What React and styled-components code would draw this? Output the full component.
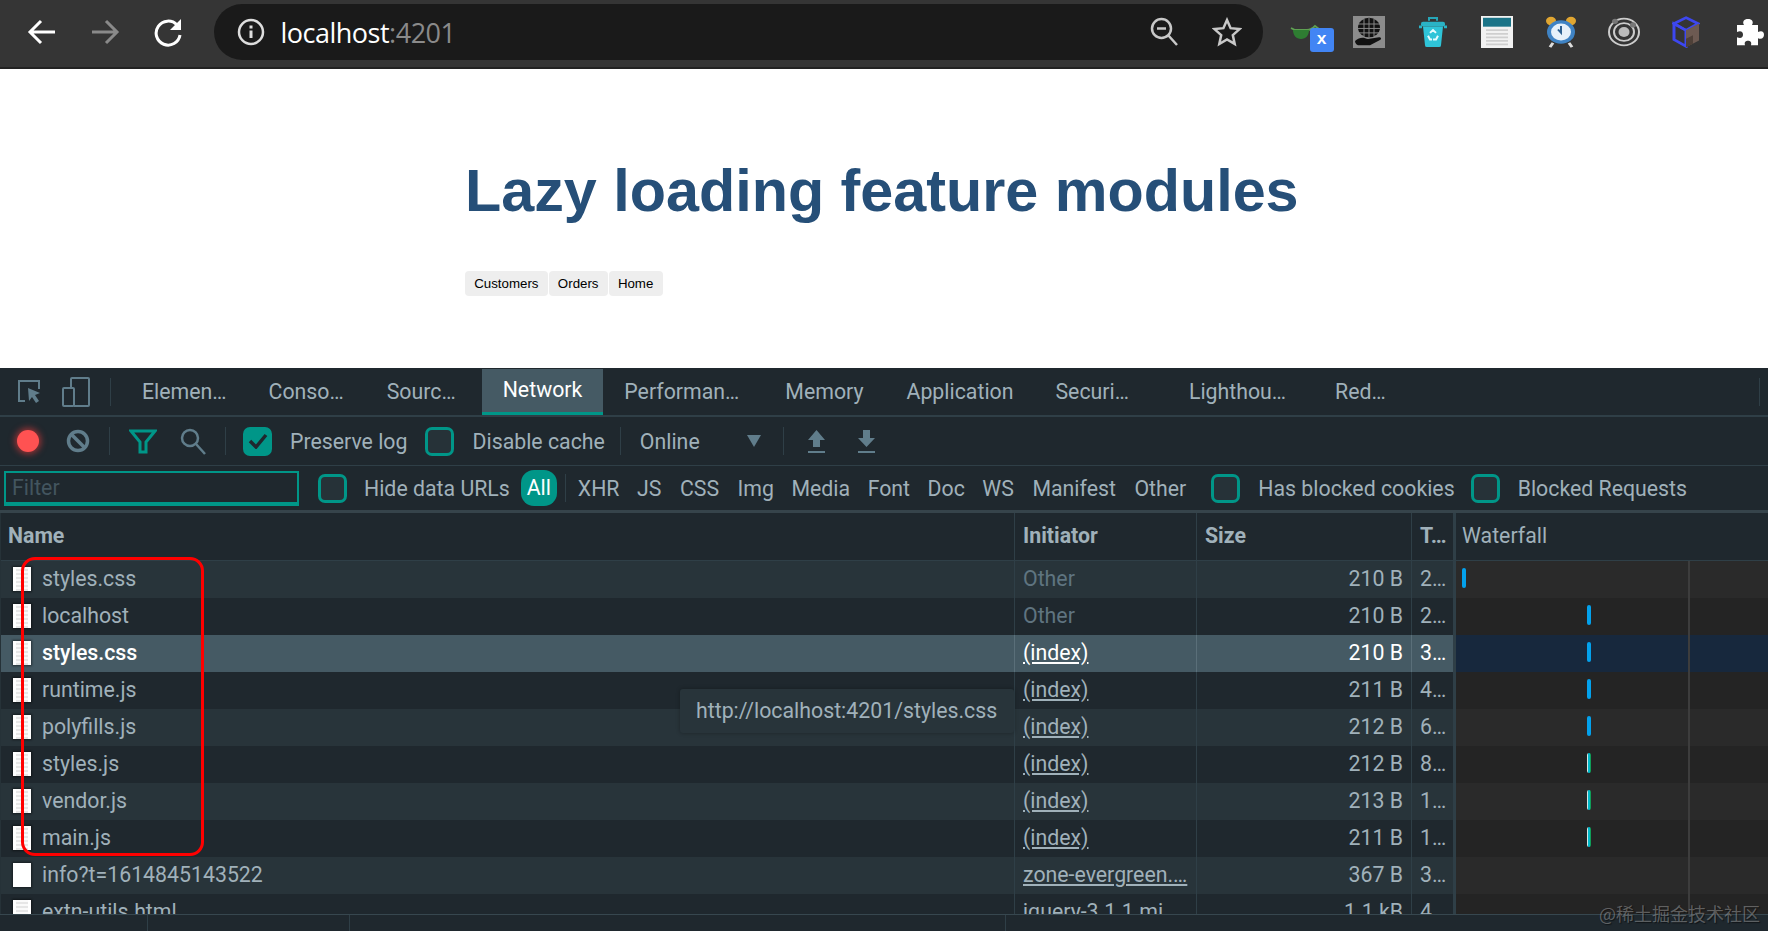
import React from 'react'
import styled, { createGlobalStyle } from 'styled-components'

const GlobalStyle = createGlobalStyle`
  html, body { margin: 0; padding: 0; background: #fff; height: 100%; overflow: hidden; }
  * { box-sizing: border-box; }
`

const TEAL = '#009688'
const TEXT = '#a0b1ba'
const ICON = '#607d8b'
const LINE = '#2f3f47'

const Page = styled.div`
  width: 1768px;
  height: 931px;
  position: relative;
  overflow: hidden;
  display: flex;
  flex-direction: column;
  font-family: Roboto, "Noto Sans", sans-serif;
`

/* browser chrome */
const ChromeBar = styled.header`
  height: 69px;
  flex: none;
  display: flex;
  align-items: flex-start;
  background: #353535;
  border-bottom: 2px solid #222;
  padding: 4px 0 0 26px;
`
const NavButton = styled.div`
  width: 32px;
  height: 56px;
  margin-right: 31px;
  display: flex;
  align-items: center;
  justify-content: center;
  flex: none;
`
const Omnibox = styled.div`
  width: 1049px;
  height: 56px;
  margin-left: -1.5px;
  flex: none;
  display: flex;
  align-items: center;
  background: #1a1a1a;
  border-radius: 28px;
  padding: 0 21px 0 23px;
`
const Url = styled.div`
  margin-left: 16px;
  flex: 1;
  font: 400 27px "Open Sans", sans-serif;
  letter-spacing: -0.5px;
  color: #fff;
  span { color: #8a8a8a; }
`
const OmniIcon = styled.div`
  display: flex;
  margin-left: ${p => p.$gap || 0}px;
`
const Extensions = styled.div`
  display: flex;
  align-items: center;
  height: 56px;
  margin-left: 26px;
`
const ExtSlot = styled.div`
  width: ${p => p.$w}px;
  margin-right: ${p => p.$gap}px;
  height: 36px;
  display: flex;
  align-items: center;
  justify-content: center;
  position: relative;
  flex: none;
`
const XBadge = styled.div`
  position: absolute;
  left: 21px;
  top: 14px;
  width: 24px;
  height: 24px;
  border-radius: 3px;
  background: #4285f4;
  color: #fff;
  font: 700 17px/24px "Liberation Mono", monospace;
  text-align: center;
`

/* the page under test */
const Content = styled.main`
  height: 299px;
  flex: none;
  background: #fff;
  padding-left: 465px;
  font-family: "Liberation Sans", Arial, sans-serif;
`
const Title = styled.h1`
  margin: 0;
  padding-top: 87px;
  font-size: 59.3px;
  line-height: 70px;
  font-weight: 700;
  color: #264f78;
`
const Nav = styled.nav`
  margin-top: 45px;
  display: flex;
  gap: 1px;
`
const NavLink = styled.a`
  height: 25px;
  padding: 0 9.2px;
  border-radius: 4px;
  background: #eee;
  color: #000;
  font-size: 13.3px;
  line-height: 25px;
`

/* devtools */
const DevTools = styled.section`
  flex: 1;
  min-height: 0;
  display: flex;
  flex-direction: column;
  background: #1f282e;
  color: ${TEXT};
  font-size: 21.3px;
`
const TabBar = styled.div`
  height: 49px;
  flex: none;
  display: flex;
  align-items: stretch;
  border-bottom: 2px solid ${LINE};
  padding-left: 17px;
`
const Tab = styled.div`
  display: flex;
  align-items: center;
  height: ${p => (p.$active ? '46px' : '47px')};
  margin-top: ${p => (p.$active ? '1px' : '0')};
  padding: ${p => (p.$active ? '0 21px 3px' : '0')};
  margin-left: ${p => p.$gap}px;
  white-space: nowrap;
  background: ${p => (p.$active ? '#455a64' : 'transparent')};
  color: ${p => (p.$active ? '#fff' : TEXT)};
  border-bottom: ${p => (p.$active ? `3px solid ${TEAL}` : 'none')};
`
const ToolGroup = styled.div`
  display: flex;
  align-items: center;
  flex: none;
  margin-left: ${p => p.$left || 0}px;
`
const Sep = styled.div`
  width: 1px;
  height: 28px;
  flex: none;
  background: ${LINE};
  margin-left: ${p => p.$left || 0}px;
`
const TabSep = styled(Sep)`
  align-self: center;
`
const TabEndSep = styled(TabSep)`
  margin-left: auto;
  margin-right: 8px;
`
const Toolbar = styled.div`
  height: 49px;
  flex: none;
  display: flex;
  align-items: center;
  border-bottom: 1px solid ${LINE};
  padding-left: 17px;
`
const RecordDot = styled.div`
  width: 22px;
  height: 22px;
  border-radius: 50%;
  background: #ff5252;
  box-shadow: 0 0 6px 2px rgba(255, 60, 60, 0.55);
  flex: none;
`
const Check = styled.div`
  width: 29px;
  height: 29px;
  flex: none;
  border-radius: 7px;
  border: 3px solid ${TEAL};
  background: ${p => (p.$on ? TEAL : '#263238')};
  margin-left: ${p => p.$left || 0}px;
  display: flex;
  align-items: center;
  justify-content: center;
`
const Label = styled.span`
  margin-left: ${p => p.$left || 18}px;
  white-space: nowrap;
`
const FilterBar = styled.div`
  height: 47px;
  flex: none;
  display: flex;
  align-items: center;
  border-bottom: 3px solid #36444b;
  padding-left: 4px;
`
const FilterInput = styled.div`
  width: 295px;
  height: 35px;
  flex: none;
  margin-top: 1px;
  border: 2px solid ${TEAL};
  border-bottom-width: 4px;
  color: #43555f;
  padding-left: 6px;
  line-height: 30px;
`
const Pill = styled.div`
  width: 36px;
  height: 36px;
  flex: none;
  margin-left: ${p => p.$left}px;
  border-radius: 13px;
  background: ${TEAL};
  color: #fff;
  text-align: center;
  line-height: 36px;
`
const TypeFilter = styled.span`
  margin-left: ${p => p.$left}px;
  white-space: nowrap;
`
const Table = styled.div`
  flex: 1;
  min-height: 0;
  overflow: hidden;
  border-left: 1px solid #263238;
`
const Row = styled.div`
  display: grid;
  grid-template-columns: 1013px 182px 215px 42px 1fr;
  height: ${p => (p.$head ? 48 : 37)}px;
  background: ${p => (p.$selected ? '#455a64' : p.$odd ? '#28343a' : '#1f282e')};
  color: ${p => (p.$selected ? '#fff' : TEXT)};
  font-weight: ${p => (p.$head ? 700 : 400)};
  border-bottom: ${p => (p.$head ? `1px solid ${LINE}` : 'none')};
`
const Cell = styled.div`
  display: flex;
  align-items: center;
  min-width: 0;
  padding: 0 8px 2px;
  overflow: hidden;
  white-space: nowrap;
  border-left: ${p => (p.$first ? 'none' : `1px solid ${p.$selected ? '#5a6f79' : LINE}`)};
  justify-content: ${p => (p.$right ? 'flex-end' : 'flex-start')};
  color: ${p => p.$color || 'inherit'};
`
const NameCell = styled(Cell)`
  padding-left: 7px;
  font-weight: ${p => (p.$selected ? 500 : 'inherit')};
`
const WaterfallHead = styled(Cell)`
  font-weight: 400;
  border-left-width: 3px;
  padding-left: 6px;
`
const InitLink = styled.span`
  text-decoration: underline;
`
const FileIcon = styled.div`
  width: 18px;
  height: 24px;
  flex: none;
  margin: 0 11px 0 5px;
  background: ${p => (p.$plain
    ? '#fff'
    : 'linear-gradient(90deg, #fff 0 3px, transparent 3px 15px, #fff 15px), repeating-linear-gradient(180deg, #fafafa 0 2px, #e6e6e6 2px 4px)')};
  box-shadow: 0 0 2px 1px rgba(0, 0, 0, 0.45);
`
const Waterfall = styled.div`
  border-left: 3px solid ${LINE};
  position: relative;
  background: ${p => (p.$selected ? '#17283d' : p.$odd ? '#2a2a2a' : '#242424')};
  &::after {
    content: '';
    position: absolute;
    left: 232px;
    top: 0;
    bottom: 0;
    width: 2px;
    background: #3d3d3d;
  }
`
const Bar = styled.div`
  position: absolute;
  top: 7px;
  left: ${p => p.$left}px;
  width: 4px;
  height: 20px;
  border-radius: 2px;
  background: ${p => (p.$mixed ? 'linear-gradient(90deg, #d8e6e6 0 1px, #00b8c8 1px 3px, #0f9d58 3px)' : '#03a1ec')};
`
const StatusBar = styled.div`
  height: 17px;
  flex: none;
  border-top: 1px solid #37474f;
  display: flex;
`
const StatusCell = styled.div`
  width: ${p => p.$w}px;
  height: 100%;
  flex: none;
  border-right: 1px solid ${LINE};
`

/* things lying over the table */
const Highlight = styled.div`
  position: absolute;
  left: 21px;
  top: 557px;
  width: 183px;
  height: 299px;
  border: 3.5px solid #f00;
  border-radius: 14px;
  pointer-events: none;
`
const Tooltip = styled.div`
  position: absolute;
  left: 680px;
  top: 689px;
  width: 334px;
  height: 44px;
  border-radius: 3px;
  background: #28343a;
  color: ${TEXT};
  font-size: 21.3px;
  padding-left: 16px;
  line-height: 44px;
  box-shadow: 0 0 4px rgba(0, 0, 0, 0.3);
`
const Watermark = styled.div`
  position: absolute;
  right: 8px;
  top: 900px;
  font: 400 18px "Noto Sans CJK SC", "Noto Sans", sans-serif;
  color: rgba(190, 190, 190, 0.42);
  text-shadow: 1px 1px 1px rgba(0, 0, 0, 0.5);
  white-space: nowrap;
`

const rows = [
  { name: 'styles.css', init: 'Other', size: '210 B', time: '2…', bar: 6 },
  { name: 'localhost', init: 'Other', size: '210 B', time: '2…', bar: 131 },
  { name: 'styles.css', init: '(index)', size: '210 B', time: '3…', bar: 131, selected: true },
  { name: 'runtime.js', init: '(index)', size: '211 B', time: '4…', bar: 131 },
  { name: 'polyfills.js', init: '(index)', size: '212 B', time: '6…', bar: 131 },
  { name: 'styles.js', init: '(index)', size: '212 B', time: '8…', bar: 131, mixed: true },
  { name: 'vendor.js', init: '(index)', size: '213 B', time: '1…', bar: 131, mixed: true },
  { name: 'main.js', init: '(index)', size: '211 B', time: '1…', bar: 131, mixed: true },
  { name: 'info?t=1614845143522', init: 'zone-evergreen.…', size: '367 B', time: '3…', plain: true },
  { name: 'extn-utils.html', init: 'jquery-3.1.1.mi…', size: '1.1 kB', time: '4…' },
]

const tabs = [
  ['Elemen…', 31], ['Conso…', 42], ['Sourc…', 43], ['Network', 26, true], ['Performan…', 21],
  ['Memory', 46], ['Application', 43], ['Securi…', 42], ['Lighthou…', 60], ['Red…', 49],
]

const types = [
  ['XHR', 12], ['JS', 17.5], ['CSS', 18.5], ['Img', 18.5], ['Media', 17.5], ['Font', 17.5],
  ['Doc', 17.5], ['WS', 17.5], ['Manifest', 18.5], ['Other', 18.5],
]

const Glasses = () => (
  <svg width="30" height="18" viewBox="0 0 30 18">
    <path d="M1 5l4 2h12c3 0 6-2 8-4l4 3" fill="none" stroke="#5fa052" strokeWidth="1.8" />
    <path d="M3 7h16c0 5-3 9-8 9-5 0-8-4-8-9z" fill="#2e7d32" />
  </svg>
)

const Globe = () => (
  <svg width="32" height="32" viewBox="0 0 32 36" preserveAspectRatio="none">
    <rect width="32" height="36" fill="#8c8c8c" />
    <circle cx="16" cy="13" r="11" fill="#111" />
    <path d="M5 9h22M5 14h22M6 19h20M11 3v20M16 2v22M21 3v20" stroke="#8c8c8c" />
    <path d="M2 28c5-5 9-4 13-2l11-2c2 0 3 2 1 3l-10 6H7c-3 0-5-2-5-5z" fill="#111" />
  </svg>
)

const Trash = () => (
  <svg width="30" height="30" viewBox="0 0 30 32" preserveAspectRatio="none">
    <path d="M11 4V1h8v3" fill="none" stroke="#26a6b8" strokeWidth="2" />
    <rect x="3" y="5" width="24" height="5" rx="2" fill="#2ab3c6" />
    <path d="M1 12h3v-3H1zM26 12h3v-3h-3z" fill="#2ab3c6" />
    <path d="M5 10h20l-2 20a2 2 0 0 1-2 2H9a2 2 0 0 1-2-2z" fill="#2fc4d8" />
    <path d="M12 17l3-3 3 3M20 20l-2 4h-3M10 20l2 4h2" fill="none" stroke="#e6fbfd" strokeWidth="2" />
  </svg>
)

const Sheet = () => (
  <svg width="32" height="32" viewBox="0 0 32 36" preserveAspectRatio="none">
    <rect width="32" height="36" fill="#f2f2f2" />
    <rect x="2" y="2" width="28" height="10" fill="#1b7488" />
    <path d="M5 16h22M5 20h22M5 24h22M5 28h22M5 32h22" stroke="#cfcfcf" strokeWidth="2" />
  </svg>
)

const Clock = () => (
  <svg width="32" height="32" viewBox="0 0 32 38" preserveAspectRatio="none">
    <circle cx="6" cy="6" r="5" fill="#e0a631" />
    <circle cx="26" cy="6" r="5" fill="#e0a631" />
    <path d="M8 32l-3 5M24 32l3 5" stroke="#ddd" strokeWidth="3" />
    <circle cx="16" cy="19" r="14" fill="#3f83c4" />
    <circle cx="16" cy="19" r="10" fill="#e6f1fa" />
    <path d="M16 12v8l-3-4" fill="none" stroke="#2c5f90" strokeWidth="2" />
  </svg>
)

const Target = () => (
  <svg width="32" height="32" viewBox="0 0 32 36" preserveAspectRatio="none">
    <circle cx="16" cy="18" r="15" fill="none" stroke="#ccc" strokeWidth="2" />
    <circle cx="16" cy="18" r="10" fill="none" stroke="#ccc" strokeWidth="2" />
    <circle cx="16" cy="18" r="5.5" fill="#bbb" />
    <circle cx="7" cy="6" r="3" fill="#777" />
    <circle cx="25" cy="10" r="3" fill="#777" />
  </svg>
)

const Box = () => (
  <svg width="28" height="32" viewBox="0 0 28 38" preserveAspectRatio="none">
    <path d="M14 2l12 7-12 8L2 9z" fill="none" stroke="#3d47f0" strokeWidth="3" />
    <path d="M2 9v19l12 8V17z" fill="none" stroke="#3d47f0" strokeWidth="3" />
    <path d="M14 17l13-8v20l-13 8z" fill="#6d5a52" />
    <path d="M14 37V27l7-4v10z" fill="#4e4038" />
  </svg>
)

const Puzzle = () => (
  <svg width="28" height="28" viewBox="0 0 28 32" preserveAspectRatio="none">
    <path d="M1 8h7c-2-4 0-7 4-7s6 3 4 7h6v8c4-2 6 0 6 3s-2 6-6 4v8h-7c1-4-1-5-3-5s-4 1-3 5H1v-9c4 2 6 0 6-3s-2-5-6-3z" fill="#fff" />
  </svg>
)

export default function App() {
  return (
    <Page>
      <GlobalStyle />
      <ChromeBar>
        <NavButton>
          <svg width="30" height="30" viewBox="0 0 30 30" fill="none" stroke="#fff" strokeWidth="3">
            <path d="M28 15H4M14 4L3 15l11 11" />
          </svg>
        </NavButton>
        <NavButton>
          <svg width="30" height="30" viewBox="0 0 30 30" fill="none" stroke="#8a8a8a" strokeWidth="3">
            <path d="M2 15h24M16 4l11 11-11 11" />
          </svg>
        </NavButton>
        <NavButton>
          <svg width="30" height="30" viewBox="0 0 30 30" fill="none">
            <path d="M24 8a12 12 0 1 0 3 10" stroke="#fff" strokeWidth="3" />
            <path d="M28 2v11H17z" fill="#fff" />
          </svg>
        </NavButton>
        <Omnibox>
          <svg width="28" height="28" viewBox="0 0 28 28" fill="none" stroke="#ddd" strokeWidth="2.5">
            <circle cx="14" cy="14" r="12" />
            <path d="M14 12.5V20" strokeWidth="3" />
            <path d="M14 7.5v3" strokeWidth="3" />
          </svg>
          <Url>localhost<span>:4201</span></Url>
          <OmniIcon>
            <svg width="28" height="30" viewBox="0 0 28 30" fill="none" stroke="#c8c8c8" strokeWidth="2.5">
              <circle cx="11.5" cy="11.5" r="9.5" />
              <path d="M18 18l9 10M7 11.5h9" />
            </svg>
          </OmniIcon>
          <OmniIcon $gap={34}>
            <svg width="30" height="30" viewBox="0 0 30 30" fill="none" stroke="#c8c8c8" strokeWidth="2.5">
              <path d="M15 3l3.6 8.2 8.9.9-6.7 6 1.9 8.8L15 22.4 7.3 27l1.9-8.9-6.7-6 8.9-.9z" />
            </svg>
          </OmniIcon>
        </Omnibox>
        <Extensions>
          <ExtSlot $w={32} $gap={32}><Glasses /><XBadge>x</XBadge></ExtSlot>
          <ExtSlot $w={32} $gap={32}><Globe /></ExtSlot>
          <ExtSlot $w={32} $gap={32}><Trash /></ExtSlot>
          <ExtSlot $w={32} $gap={32}><Sheet /></ExtSlot>
          <ExtSlot $w={32} $gap={31}><Clock /></ExtSlot>
          <ExtSlot $w={32} $gap={32}><Target /></ExtSlot>
          <ExtSlot $w={28} $gap={36}><Box /></ExtSlot>
          <ExtSlot $w={28} $gap={0}><Puzzle /></ExtSlot>
        </Extensions>
      </ChromeBar>

      <Content>
        <Title>Lazy loading feature modules</Title>
        <Nav>
          <NavLink>Customers</NavLink>
          <NavLink>Orders</NavLink>
          <NavLink>Home</NavLink>
        </Nav>
      </Content>

      <DevTools>
        <TabBar>
          <ToolGroup>
            <svg width="24" height="26" viewBox="0 0 24 26" fill="none" stroke={ICON} strokeWidth="2">
              <path d="M8 22H2V2h20v8" />
              <path d="M11 9l12 5-5 2 4 6-3 2-4-6-3 4z" fill={ICON} stroke="none" />
            </svg>
          </ToolGroup>
          <ToolGroup $left={21}>
            <svg width="28" height="30" viewBox="0 0 28 30" fill="none" stroke={ICON} strokeWidth="2">
              <path d="M9 10V2a1 1 0 0 1 1-1h16a1 1 0 0 1 1 1v26a1 1 0 0 1-1 1H12" />
              <rect x="1" y="11" width="11" height="18" rx="1" />
            </svg>
          </ToolGroup>
          <TabSep $left={20} />
          {tabs.map(([label, gap, active]) => (
            <Tab key={label} $gap={gap} $active={active}>{label}</Tab>
          ))}
          <TabEndSep />
        </TabBar>

        <Toolbar>
          <RecordDot />
          <ToolGroup $left={27}>
            <svg width="24" height="24" viewBox="0 0 24 24" fill="none" stroke={ICON} strokeWidth="3.5">
              <circle cx="12" cy="12" r="9.5" />
              <path d="M5 5l14 14" />
            </svg>
          </ToolGroup>
          <Sep $left={19} />
          <ToolGroup $left={19}>
            <svg width="28" height="28" viewBox="0 0 28 28" fill="none" stroke={TEAL} strokeWidth="3">
              <path d="M2 4h24l-9 11v10h-6V15z" />
            </svg>
          </ToolGroup>
          <ToolGroup $left={23}>
            <svg width="26" height="28" viewBox="0 0 26 28" fill="none" stroke={ICON} strokeWidth="2.5">
              <circle cx="10" cy="11" r="8" />
              <path d="M16 17l9 10" />
            </svg>
          </ToolGroup>
          <Sep $left={19} />
          <Check $on $left={17}>
            <svg width="20" height="16" viewBox="0 0 20 16" fill="none" stroke="#1f282e" strokeWidth="3.5">
              <path d="M2 8l6 6L18 2" />
            </svg>
          </Check>
          <Label>Preserve log</Label>
          <Check $left={18} />
          <Label>Disable cache</Label>
          <Sep $left={15} />
          <Label $left={19}>Online</Label>
          <ToolGroup $left={47}>
            <svg width="14" height="12" viewBox="0 0 14 12" fill={ICON}><path d="M0 0h14L7 12z" /></svg>
          </ToolGroup>
          <Sep $left={22} />
          <ToolGroup $left={23}>
            <svg width="19" height="24" viewBox="0 0 19 24" fill={ICON}>
              <path d="M9.5 1L18 11h-5v7H6v-7H1z" />
              <path d="M1 22h17v2H1z" />
            </svg>
          </ToolGroup>
          <ToolGroup $left={31}>
            <svg width="19" height="24" viewBox="0 0 19 24" fill={ICON}>
              <path d="M6 1h7v8h5l-8.5 9L1 9h5z" />
              <path d="M1 22h17v2H1z" />
            </svg>
          </ToolGroup>
        </Toolbar>

        <FilterBar>
          <FilterInput>Filter</FilterInput>
          <Check $left={19} />
          <Label $left={17}>Hide data URLs</Label>
          <Pill $left={11}>All</Pill>
          <Sep $left={8} />
          {types.map(([label, left]) => (
            <TypeFilter key={label} $left={left}>{label}</TypeFilter>
          ))}
          <Check $left={25} />
          <Label>Has blocked cookies</Label>
          <Check $left={16} />
          <Label>Blocked Requests</Label>
        </FilterBar>

        <Table>
          <Row $head>
            <NameCell $first>Name</NameCell>
            <Cell>Initiator</Cell>
            <Cell>Size</Cell>
            <Cell>T…</Cell>
            <WaterfallHead>Waterfall</WaterfallHead>
          </Row>
          {rows.map((row, i) => (
            <Row key={row.name + i} $odd={i % 2 === 0} $selected={row.selected}>
              <NameCell $first $selected={row.selected}>
                <FileIcon $plain={row.plain} />
                {row.name}
              </NameCell>
              <Cell $selected={row.selected} $color={row.init === 'Other' ? '#5f7480' : undefined}>
                {row.init === 'Other' ? row.init : <InitLink>{row.init}</InitLink>}
              </Cell>
              <Cell $selected={row.selected} $right>{row.size}</Cell>
              <Cell $selected={row.selected}>{row.time}</Cell>
              <Waterfall $odd={i % 2 === 0} $selected={row.selected}>
                {row.bar !== undefined && <Bar $left={row.bar} $mixed={row.mixed} />}
              </Waterfall>
            </Row>
          ))}
        </Table>

        <StatusBar>
          <StatusCell $w={148} />
          <StatusCell $w={202} />
          <StatusCell $w={656} />
        </StatusBar>
      </DevTools>

      <Highlight />
      <Tooltip>http://localhost:4201/styles.css</Tooltip>
      <Watermark>@稀土掘金技术社区</Watermark>
    </Page>
  )
}
